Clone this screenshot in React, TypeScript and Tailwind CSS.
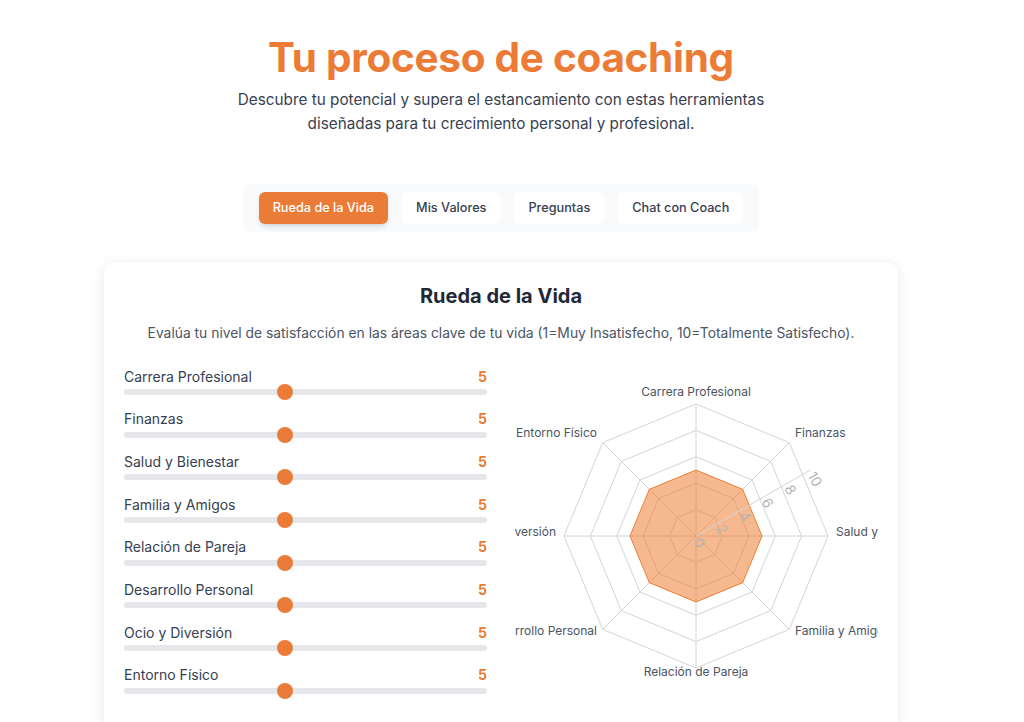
import { useState } from "react";

const areas = [
  "Carrera Profesional",
  "Finanzas",
  "Salud y Bienestar",
  "Familia y Amigos",
  "Relación de Pareja",
  "Desarrollo Personal",
  "Ocio y Diversión",
  "Entorno Físico",
];

const tabs = ["Rueda de la Vida", "Mis Valores", "Preguntas", "Chat con Coach"];

function RadarChart({ values }: { values: number[] }) {
  const cx = 181;
  const cy = 170;
  const R = 132;
  const n = values.length;
  const pt = (i: number, r: number) => {
    const a = Math.PI / 2 - (i * 2 * Math.PI) / n;
    return [cx + r * Math.cos(a), cy - r * Math.sin(a)];
  };
  const poly = (r: (i: number) => number) =>
    values.map((_, i) => pt(i, r(i)).join(",")).join(" ");
  const rings = [1, 2, 3, 4, 5].map((k) => (R * k) / 5);
  const rad = (30 * Math.PI) / 180;

  return (
    <svg width="363" height="340" className="block overflow-hidden">
      {rings.map((r) => (
        <polygon key={r} points={poly(() => r)} fill="none" stroke="#d4d4d4" strokeWidth="1" />
      ))}
      {values.map((_, i) => {
        const [x, y] = pt(i, R);
        return <line key={i} x1={cx} y1={cy} x2={x} y2={y} stroke="#d4d4d4" strokeWidth="1" />;
      })}
      <polygon
        points={poly((i) => (R * values[i]) / 10)}
        fill="#ec7d33"
        fillOpacity="0.55"
        stroke="#ec7d33"
        strokeWidth="1"
      />
      <line x1={cx} y1={cy} x2={cx + R * Math.cos(rad)} y2={cy - R * Math.sin(rad)} stroke="#d4d4d4" />
      {[0, 2, 4, 6, 8, 10].map((t) => {
        const r = (R * t) / 10;
        const x = cx + r * Math.cos(rad);
        const y = cy - r * Math.sin(rad);
        return (
          <text
            key={t}
            x={x}
            y={y}
            transform={`rotate(60, ${x}, ${y})`}
            fill="#b5b5b5"
            fontSize="14"
            textAnchor="start"
            dy="0.4em"
            dx="3"
          >
            {t}
          </text>
        );
      })}
      {areas.map((a, i) => {
        const [x, y] = pt(i, R + 8);
        const cos = Math.cos(Math.PI / 2 - (i * 2 * Math.PI) / n);
        const anchor = Math.abs(cos) < 0.01 ? "middle" : cos > 0 ? "start" : "end";
        return (
          <text key={a} x={x} y={y} fontSize="12" fill="#4b5563" textAnchor={anchor}>
            {a}
          </text>
        );
      })}
    </svg>
  );
}

export default function App() {
  const [active, setActive] = useState(0);
  const [values, setValues] = useState<number[]>(areas.map(() => 5));

  return (
    <div className="min-h-screen bg-white font-['Inter',sans-serif]">
      <div className="w-[1002px] flex flex-col items-center pt-[36px]">
        <h1 className="text-[40.5px] leading-[44px] font-bold text-[#ec7b36] tracking-[-0.3px]">
          Tu proceso de coaching
        </h1>
        <p className="mt-2 max-w-[540px] text-center text-[15.3px] leading-6 text-[#374151]">
          Descubre tu potencial y supera el estancamiento con estas herramientas diseñadas para tu crecimiento personal y profesional.
        </p>

        <div className="mt-12 flex gap-3.5 rounded-lg bg-gray-50 px-4 py-2">
          {tabs.map((t, i) => (
            <button
              key={t}
              onClick={() => setActive(i)}
              className={
                i === active
                  ? "h-8 rounded-md bg-[#ea7c38] px-3.5 text-[12.7px] font-medium text-white shadow-md"
                  : "h-8 rounded-md bg-white px-3.5 text-[12.7px] font-medium text-[#374151]"
              }
            >
              {t}
            </button>
          ))}
        </div>

        <div className="mt-[30px] w-[794px] rounded-xl bg-white px-5 pt-5 pb-8 shadow-[0_2px_14px_rgba(0,0,0,0.09)]">
          <h2 className="text-center text-[20px] leading-7 font-bold text-[#1f2937]">Rueda de la Vida</h2>
          <p className="mt-[13px] text-center text-[13.85px] leading-5 text-[#4b5563]">
            Evalúa tu nivel de satisfacción en las áreas clave de tu vida (1=Muy Insatisfecho, 10=Totalmente Satisfecho).
          </p>

          <div className="mt-[23px] grid grid-cols-2 gap-7">
            <div className="flex flex-col gap-[13.7px]">
              {areas.map((a, i) => {
                const pct = ((values[i] - 1) / 9) * 100;
                return (
                  <div key={a}>
                    <div className="flex h-5 items-center justify-between">
                      <span className="text-[14px] text-[#374151]">{a}</span>
                      <span className="text-[14px] font-bold text-[#ec7b36]">{values[i]}</span>
                    </div>
                    <div className="relative mt-[3px] h-1.5 rounded-full bg-gray-200">
                      <input
                        type="range"
                        min={1}
                        max={10}
                        value={values[i]}
                        onChange={(e) => {
                          const v = [...values];
                          v[i] = Number(e.target.value);
                          setValues(v);
                        }}
                        className="absolute inset-0 h-full w-full cursor-pointer opacity-0"
                      />
                      <div
                        className="pointer-events-none absolute top-1/2 h-4 w-4 -translate-x-1/2 -translate-y-1/2 rounded-full bg-[#ea7c38]"
                        style={{ left: `${pct}%` }}
                      />
                    </div>
                  </div>
                );
              })}
            </div>
            <div className="overflow-hidden">
              <RadarChart values={values} />
            </div>
          </div>
        </div>
      </div>
    </div>
  );
}
